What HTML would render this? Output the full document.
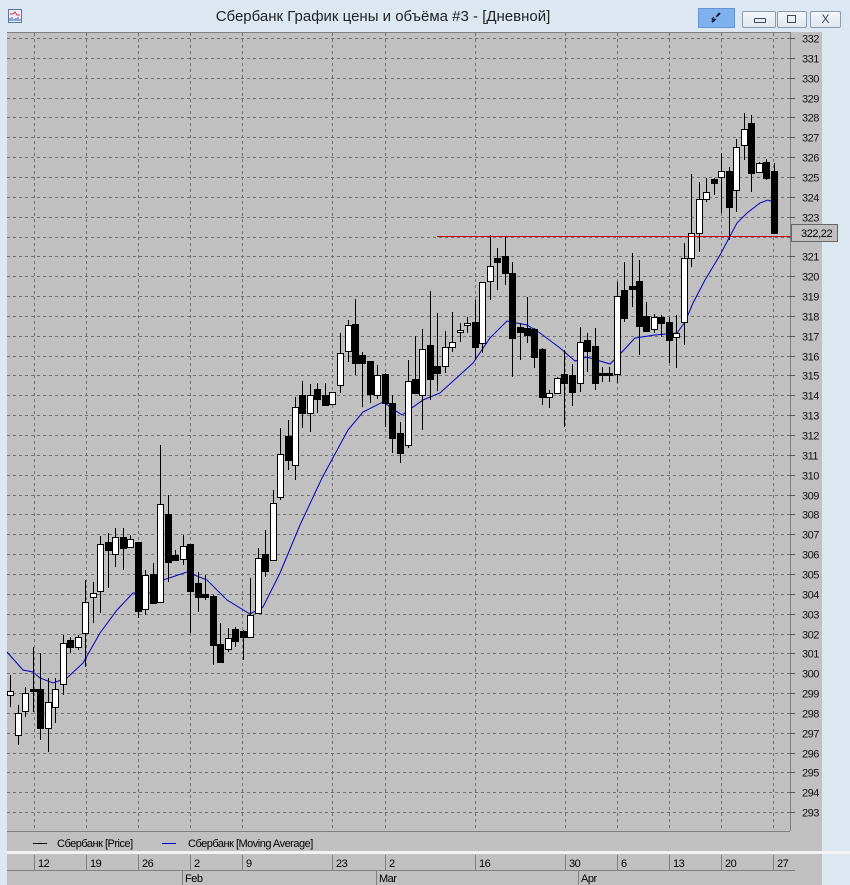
<!DOCTYPE html>
<html><head><meta charset="utf-8"><style>
body{margin:0;width:850px;height:885px;background:#dce7f2;position:relative;overflow:hidden;font-family:"Liberation Sans",sans-serif}
.t{position:absolute;top:8px;left:0;width:766px;text-align:center;font-size:15px;color:#222}
.b{position:absolute;top:11px;height:15px;border:1px solid #8a9bb0;border-radius:2px;background:linear-gradient(#f4f7fb,#dfe6ee)}
</style></head><body>
<svg width="14" height="14" style="position:absolute;left:8px;top:9px"><rect x="0.5" y="0.5" width="13" height="13" fill="#eef" stroke="#57a"/><path d="M2 5h3l2-2 2 3h3" stroke="#c33" fill="none"/><path d="M2 12V9M4 12V8M6 12V10M8 12V9M10 12V8M12 12V10" stroke="#35a"/></svg>
<div class="t">Сбербанк График цены и объёма #3 - [Дневной]</div>
<div style="position:absolute;left:698px;top:8px;width:35px;height:18px;background:#7fb0f0;border:1px solid #6a94cc"></div>
<svg style="position:absolute;left:709px;top:11px" width="14" height="13"><path d="M3 11l3-3M8 5l3-3" stroke="#123" stroke-width="2" fill="none"/><path d="M5 6l-2 2 2 2 2-2M9 4l-2 2" stroke="#123" fill="none"/></svg>
<div class="b" style="left:742px;width:32px"><div style="position:absolute;left:11px;top:6px;width:10px;height:3px;border:1px solid #445;border-radius:1px"></div></div>
<div class="b" style="left:777px;width:28px"><div style="position:absolute;left:9px;top:3px;width:7px;height:6px;border:1px solid #445"></div></div>
<div class="b" style="left:810px;width:29px;text-align:center;font-size:12px;line-height:15px;color:#445">X</div>
<svg width="850" height="885" style="position:absolute;left:0;top:0" id="s" font-family="Liberation Sans, sans-serif"></svg>
<script>
var s=document.getElementById('s'),h='';
h+='<rect x="7" y="32" width="815" height="853" fill="#c0c0c0"/>';
h+='<line x1="7" y1="32.5" x2="790" y2="32.5" stroke="#808080"/>';
h+='<line x1="790.5" y1="32" x2="790.5" y2="831" stroke="#808080"/>';
h+='<line x1="7" y1="831.5" x2="790" y2="831.5" stroke="#808080"/>';
for(var p=332;p>=293;p--){var y=38+(332-p)*19.85;y=Math.round(y)+.5;
h+='<line x1="7" y1="'+y+'" x2="790" y2="'+y+'" stroke="#707070" stroke-dasharray="3,3"/>';
h+='<line x1="790" y1="'+y+'" x2="795" y2="'+y+'" stroke="#555"/>';
h+='<text x="802" y="'+(y+4)+'" font-size="11" fill="#111" letter-spacing="-0.5">'+p+'</text>';}
var vx=[34,86,138,190,242,332,385,475,565,617,669,721,773];
vx.forEach(function(x){h+='<line x1="'+(x+.5)+'" y1="33" x2="'+(x+.5)+'" y2="831" stroke="#707070" stroke-dasharray="3,3"/>';});
var ma=[[7,652],[23,670],[33,672],[40,678],[53,683],[67,678],[83,663],[100,633],[117,610],[133,593],[153,593],[163,580],[187,572],[207,580],[227,600],[250,614],[263,607],[280,573],[300,525],[322,478],[348,430],[363,412],[383,402],[402,415],[423,400],[440,393],[473,363],[490,338],[507,321],[527,325],[540,333],[560,348],[575,361],[587,357],[610,364],[622,352],[635,338],[655,335],[677,333],[685,322],[693,303],[705,280],[720,255],[737,223],[747,213],[760,203],[768,200],[775,203]];
h+='<polyline fill="none" stroke="#0000c0" points="'+ma.map(function(a){return a.join(',')}).join(' ')+'"/>';
// x, wickTop, wickBot, bodyTop, bodyBot, filled
var c=[[10,675,707,691,695,0],[18,705,745,713,735,0],[25,687,717,693,711,0],[33,647,712,689,690,1],[40,653,740,689,728,1],[48,678,752,702,728,0],[55,678,723,689,707,0],[63,635,695,643,684,0],[70,637,653,640,647,1],[78,635,650,637,647,0],[85,580,667,602,633,0],[93,582,623,593,597,0],[100,536,613,544,591,0],[108,533,588,542,550,1],[115,528,567,537,554,0],[123,528,570,537,548,1],[130,535,548,539,547,0],[138,542,618,542,611,1],[145,570,615,575,609,0],[153,563,603,574,603,1],[160,445,602,504,602,0],[168,495,582,514,562,1],[175,550,560,555,560,1],[183,535,565,546,559,0],[190,544,633,544,591,1],[198,572,612,583,597,1],[205,575,600,594,597,1],[213,595,665,596,645,1],[220,623,662,644,662,1],[228,628,652,638,649,0],[235,627,647,629,641,1],[243,630,660,631,637,1],[250,578,637,615,637,0],[258,548,613,558,613,0],[265,530,577,554,571,1],[273,490,560,503,560,0],[280,428,500,454,497,0],[288,420,470,436,460,1],[295,397,480,407,465,0],[302,381,428,395,413,1],[310,384,432,395,413,0],[317,383,413,389,399,1],[325,383,405,395,405,1],[332,393,405,392,404,0],[340,333,393,353,385,0],[348,320,362,325,351,0],[355,299,375,324,363,1],[362,352,407,355,363,1],[370,361,403,361,394,1],[377,365,399,375,395,0],[385,373,427,374,403,1],[392,395,453,403,438,1],[400,422,463,433,453,1],[408,360,448,381,445,0],[415,336,393,379,393,1],[422,329,430,349,395,0],[430,291,400,345,379,1],[437,313,391,366,373,1],[445,331,373,347,366,0],[452,312,352,342,347,0],[460,323,342,330,332,0],[467,317,333,323,325,0],[475,300,360,322,347,1],[482,282,353,282,343,0],[490,235,300,266,281,0],[497,248,290,258,262,1],[505,237,285,256,273,1],[512,262,377,273,338,1],[520,323,360,327,332,1],[527,297,343,328,335,1],[534,328,368,329,357,1],[542,348,405,349,397,1],[549,390,408,393,397,0],[557,377,393,378,393,0],[564,350,427,374,383,1],[572,364,406,375,392,1],[580,327,392,342,383,0],[587,333,372,340,351,1],[595,328,390,346,383,1],[602,367,382,373,375,1],[609,367,382,373,375,1],[617,282,383,296,374,0],[624,262,322,290,318,1],[632,253,307,286,289,1],[639,260,355,281,326,1],[646,302,330,316,331,1],[654,314,333,317,329,0],[661,315,337,317,323,1],[669,317,363,322,340,1],[676,315,368,333,337,0],[684,243,345,258,322,0],[691,174,267,233,258,0],[699,182,252,199,233,0],[706,178,202,192,199,0],[714,178,195,179,183,1],[721,153,213,171,177,0],[729,167,240,171,207,1],[736,139,212,147,190,0],[744,113,160,129,145,0],[751,115,192,123,173,1],[759,162,173,163,172,0],[766,159,180,162,178,1],[774,163,233,171,233,1]];
c.forEach(function(k){var x=k[0];
h+='<line x1="'+(x+.5)+'" y1="'+k[1]+'" x2="'+(x+.5)+'" y2="'+k[2]+'" stroke="#000"/>';
var bh=Math.max(k[4]-k[3],2);
h+='<rect x="'+(x-2.5)+'" y="'+(k[3]+.5)+'" width="6" height="'+bh+'" fill="'+(k[5]?'#000':'#fff')+'" stroke="#000"/>';});
h+='<line x1="437" y1="236.5" x2="790" y2="236.5" stroke="#d00000"/>';
h+='<rect x="791.5" y="224.5" width="46" height="17" fill="#c0c0c0" stroke="#666"/><text x="801" y="237" font-size="11" letter-spacing="-0.4">322,22</text>';
// legend
h+='<line x1="33" y1="843.5" x2="47" y2="843.5" stroke="#000"/><text x="57" y="847" font-size="11" letter-spacing="-0.5">Сбербанк [Price]</text>';
h+='<line x1="162" y1="843.5" x2="176" y2="843.5" stroke="#0000c0"/><text x="188" y="847" font-size="11" letter-spacing="-0.5">Сбербанк [Moving Average]</text>';
h+='<rect x="7" y="851" width="843" height="3" fill="#f2f2f2"/>';
h+='<line x1="7" y1="870.5" x2="795" y2="870.5" stroke="#808080"/>';
var dl=['12','19','26','2','9','23','2','16','30','6','13','20','27'];
vx.forEach(function(x,i){h+='<line x1="'+(x+.5)+'" y1="855" x2="'+(x+.5)+'" y2="870" stroke="#808080"/><text x="'+(x+4)+'" y="867" font-size="11" letter-spacing="-0.5">'+dl[i]+'</text>';});
[[182,'Feb'],[376,'Mar'],[578,'Apr']].forEach(function(m){h+='<line x1="'+(m[0]+.5)+'" y1="871" x2="'+(m[0]+.5)+'" y2="885" stroke="#808080"/><text x="'+(m[0]+3)+'" y="882" font-size="11" letter-spacing="-0.5">'+m[1]+'</text>';});
s.innerHTML=h;
</script>
</body></html>
